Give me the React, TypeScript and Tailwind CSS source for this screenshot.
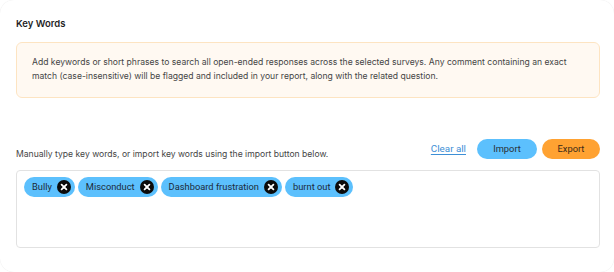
import React from 'react';

const keywords = ['Bully', 'Misconduct', 'Dashboard frustration', 'burnt out'];

function RemoveIcon() {
  return (
    <svg width="14" height="14" viewBox="0 0 14 14" aria-hidden="true">
      <circle cx="7" cy="7" r="7" fill="#0b0b0b" />
      <path d="M4.6 4.6 L9.4 9.4 M9.4 4.6 L4.6 9.4" stroke="#ffffff" strokeWidth="1.8" strokeLinecap="round" />
    </svg>
  );
}

function KeywordChip({ label }: { label: string }) {
  return (
    <span className="flex h-[20px] items-center gap-[5px] rounded-full bg-[#5cc0fd] pl-[8px] pr-[4px] text-[9.3px] text-[#1c2a38] [font-family:Roboto,sans-serif]">
      {label}
      <RemoveIcon />
    </span>
  );
}

export default function App() {
  return (
    <div className="h-[272px] w-[614px] overflow-hidden rounded-[14px] bg-white pl-4 pr-[14px] pt-[17px] shadow-[0_0_1px_rgba(0,0,0,0.12)] [font-family:Inter,sans-serif]">
      <h2 className="text-[9.5px] font-semibold leading-[14px] text-[#1f1f1f]">Key Words</h2>

      <div className="mt-[11px] rounded-[6px] border border-[#fde4c2] bg-[#fff9f2] pb-[14px] pl-[15px] pr-4 pt-[12px] text-[8.6px] leading-[14px] text-[#454545]">
        Add keywords or short phrases to search all open-ended responses across the selected surveys. Any comment containing an exact
        <br />
        match (case-insensitive) will be flagged and included in your report, along with the related question.
      </div>

      {/* Manual entry row */}
      <div className="mt-[41px] flex items-start justify-between">
        <p className="pt-[9px] text-[8.6px] leading-[12px] text-[#454545]">
          Manually type key words, or import key words using the import button below.
        </p>
        <div className="flex items-center [font-family:Roboto,sans-serif]">
          <button className="mr-[11px] text-[9.8px] text-[#3d8fd6] underline underline-offset-2">Clear all</button>
          <button className="mr-[5px] h-[20px] w-[60px] rounded-full bg-[#5cc0fd] text-[9.3px] text-[#2a2f36]">Import</button>
          <button className="h-[20px] w-[58px] rounded-full bg-[#ffa232] text-[9.3px] text-[#3a2a18]">Export</button>
        </div>
      </div>

      <div className="mt-[10px] h-[78px] rounded-[4px] border border-[#e2e2e2] pl-[7px] pt-[6px]">
        <div className="flex flex-wrap gap-[3px]">
          {keywords.map((k) => (
            <KeywordChip key={k} label={k} />
          ))}
        </div>
      </div>
    </div>
  );
}
